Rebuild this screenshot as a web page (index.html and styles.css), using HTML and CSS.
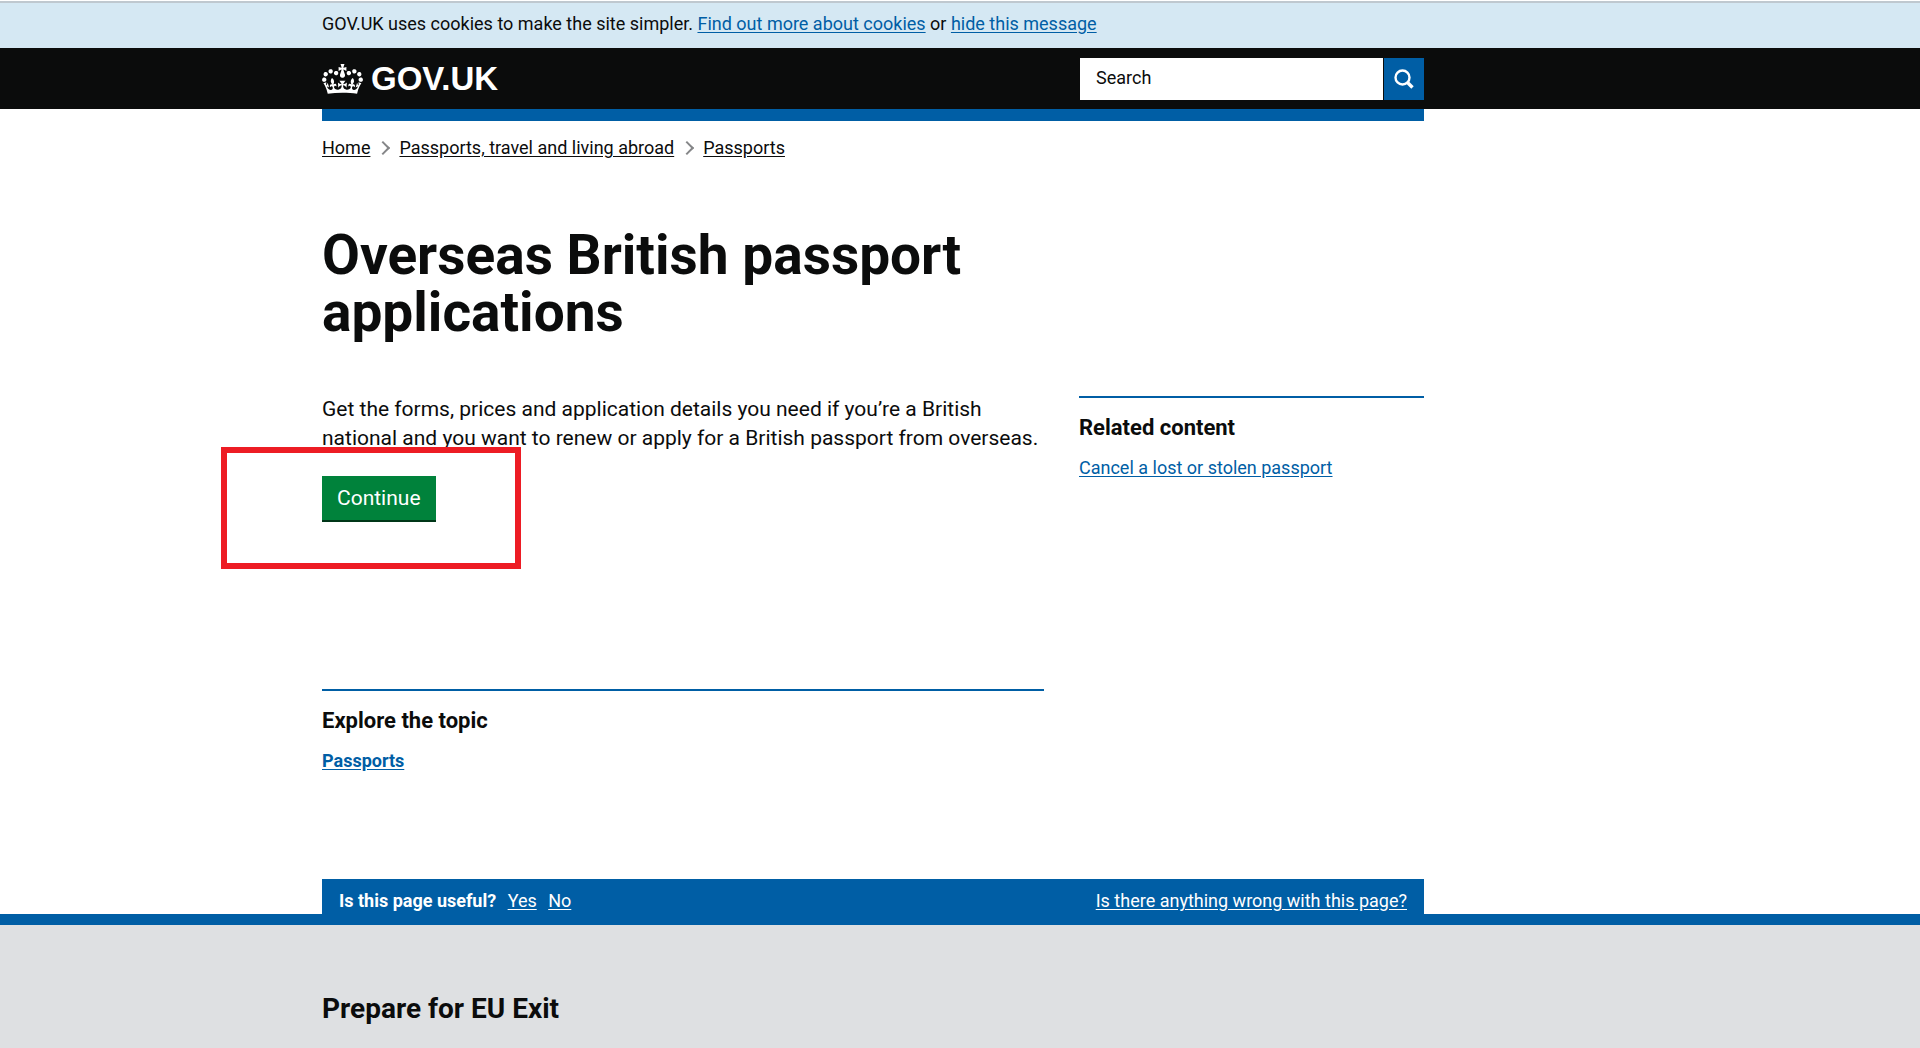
FILE: index.html
```html
<!DOCTYPE html>
<html lang="en">
<head>
  <meta charset="UTF-8">
  <meta name="viewport" content="width=device-width, initial-scale=1.0">
  <title>Overseas British passport applications - GOV.UK</title>
  <link rel="stylesheet" href="styles.css">
</head>
<body>
  <div class="cookie-bar">
    <p class="wrapper">GOV.UK uses cookies to make the site simpler. <a href="#">Find out more about cookies</a> or <a href="#">hide this message</a></p>
  </div>

  <header class="header">
    <div class="wrapper header-inner">
      <a href="#" class="logo">
        <svg class="crown" viewBox="0 0 132 97" width="41" height="30" aria-hidden="true">
          <path fill="currentColor" d="M25 30.2c3.5 1.5 7.7-.2 9.1-3.7 1.5-3.6-.2-7.8-3.9-9.2-3.6-1.4-7.6.3-9.1 3.9-1.4 3.5.3 7.5 3.9 9zM9 39.5c3.6 1.5 7.8-.2 9.2-3.7 1.5-3.6-.2-7.8-3.9-9.1-3.6-1.5-7.6.2-9.1 3.8-1.4 3.5.3 7.5 3.8 9zM4.4 57.2c3.5 1.5 7.7-.2 9.1-3.8 1.5-3.6-.2-7.7-3.9-9.1-3.5-1.5-7.6.3-9.1 3.8-1.4 3.5.3 7.6 3.9 9.1zm38.3-21.4c3.5 1.5 7.7-.2 9.1-3.8 1.5-3.6-.2-7.7-3.9-9.1-3.6-1.5-7.6.3-9.1 3.8-1.3 3.6.4 7.7 3.9 9.1zm64.4-5.6c-3.6 1.5-7.8-.2-9.1-3.7-1.5-3.6.2-7.8 3.8-9.2 3.6-1.4 7.7.3 9.2 3.9 1.3 3.5-.4 7.5-3.9 9zm15.9 9.3c-3.6 1.5-7.7-.2-9.1-3.7-1.5-3.6.2-7.8 3.7-9.1 3.6-1.5 7.7.2 9.2 3.8 1.5 3.5-.3 7.5-3.8 9zm4.7 17.7c-3.6 1.5-7.8-.2-9.2-3.8-1.5-3.6.2-7.7 3.9-9.1 3.6-1.5 7.7.3 9.2 3.8 1.3 3.5-.4 7.6-3.9 9.1zM89.3 35.8c-3.6 1.5-7.8-.2-9.2-3.8-1.4-3.6.2-7.7 3.9-9.1 3.6-1.5 7.7.3 9.2 3.8 1.4 3.6-.3 7.7-3.9 9.1zM69.7 17.7l8.9 4.7V9.3l-8.9 2.8c-.2-.3-.5-.6-.9-.9L72.4 0H59.6l3.5 11.2c-.3.3-.6.5-.9.9l-8.8-2.8v13.1l8.8-4.7c.3.3.6.7.9.9l-5 15.4v.1c-.2.8-.4 1.6-.4 2.4 0 4.1 3.1 7.5 7 8.1h.2c.3 0 .7.1 1 .1.4 0 .7 0 1-.1h.2c4-.6 7.1-4.1 7.1-8.1 0-.8-.1-1.7-.4-2.4V34l-5.1-15.4c.4-.2.7-.6 1-.9zM66 92.8c16.9 0 32.8 1.1 47.1 3.2 4-16.9 8.9-26.7 14-33.5l-9.6-3.4c1 4.9 1.1 7.2 0 10.2-1.5-1.4-3-4.3-4.2-8.7L108.6 76c2.8-2 5-3.2 7.5-3.3-4.4 9.4-10 11.9-13.6 11.2-4.3-.8-6.3-4.6-5.6-7.9 1-4.7 5.7-5.9 8-.5 4.3-8.7-3-11.4-7.6-8.8 7.1-7.2 7.9-13.5 2.1-21.1-8 6.1-8.1 12.3-4.5 20.8-4.7-5.4-12.1-2.5-9.5 6.2 3.4-5.2 7.9-2 7.2 3.1-.6 4.3-6.4 7.8-13.5 7.2-10.3-.9-10.9-8-11.2-13.8 2.5-.5 7.1 1.8 11 7.3L80.2 60c-4.1 4.4-8 5.3-12.3 5.4 1.4-4.4 8-11.6 8-11.6H55.5s6.4 7.2 7.9 11.6c-4.2-.1-8-1-12.3-5.4l1.4 16.4c3.9-5.5 8.5-7.7 10.9-7.3-.3 5.8-.9 12.8-11.1 13.8-7.2.6-12.9-2.9-13.5-7.2-.7-5 3.8-8.3 7.1-3.1 2.7-8.7-4.6-11.6-9.4-6.2 3.7-8.5 3.6-14.7-4.6-20.8-5.8 7.6-5 13.9 2.2 21.1-4.7-2.6-11.9.1-7.7 8.8 2.3-5.5 7.1-4.2 8.1.5.7 3.3-1.3 7.1-5.7 7.9-3.5.7-9-1.8-13.5-11.2 2.5.1 4.7 1.3 7.5 3.3l-4.7-15.4c-1.2 4.4-2.7 7.2-4.3 8.7-1.1-3-.9-5.3 0-10.2l-9.5 3.4c5 6.9 9.9 16.7 14 33.5 14.8-2.1 30.8-3.2 47.7-3.2z"/>
        </svg>
        <span>GOV.UK</span>
      </a>
      <form class="search">
        <input type="search" name="q" placeholder="Search" aria-label="Search">
        <button type="submit" aria-label="Search GOV.UK">
          <svg viewBox="0 0 20 20" width="20" height="20" fill="none" stroke="currentColor" aria-hidden="true">
            <circle cx="8.5" cy="8.5" r="7" stroke-width="2.4"/>
            <path d="M13.5 13.5l5 5" stroke-width="3.4"/>
          </svg>
        </button>
      </form>
    </div>
  </header>

  <div class="wrapper">
    <div class="header-bar"></div>

    <nav aria-label="Breadcrumb">
      <ol class="breadcrumbs">
        <li><a href="#">Home</a></li>
        <li><a href="#">Passports, travel and living abroad</a></li>
        <li><a href="#">Passports</a></li>
      </ol>
    </nav>

    <main>
      <h1>Overseas British passport applications</h1>

      <div class="columns">
        <div class="content">
          <p class="intro">Get the forms, prices and application details you need if you’re a British national and you want to renew or apply for a British passport from overseas.</p>
          <div class="start">
            <button type="button" class="button">Continue</button>
            <div class="highlight"></div>
          </div>

          <section class="topic">
            <h2>Explore the topic</h2>
            <a href="#">Passports</a>
          </section>
        </div>

        <aside class="related">
          <h2>Related content</h2>
          <a href="#">Cancel a lost or stolen passport</a>
        </aside>
      </div>
    </main>

    <div class="feedback">
      <p><strong>Is this page useful?</strong> <a href="#">Yes</a> <a href="#">No</a></p>
      <a href="#">Is there anything wrong with this page?</a>
    </div>
  </div>

  <footer class="footer">
    <div class="wrapper">
      <h2>Prepare for EU Exit</h2>
    </div>
  </footer>
</body>
</html>
```
FILE: styles.css
```css
* {
  box-sizing: border-box;
}

body {
  display: flex;
  flex-direction: column;
  min-height: 100vh;
  margin: 0;
  font-family: Roboto, "Liberation Sans", sans-serif;
  font-size: 18px;
  line-height: 24px;
  color: #0b0c0c;
  background: #fff;
}

h1, h2, p, ol {
  margin: 0;
  padding: 0;
}

h2 {
  font-size: 22px;
  line-height: 28px;
}

a {
  color: #005ea5;
  text-underline-offset: 2px;
}

.wrapper {
  width: calc(100% - 40px);
  max-width: 1102px;
  margin-left: max(20px, calc(50% - 638px));
}

/* Cookie message */
.cookie-bar {
  margin-top: 1px;
  padding: 9px 0 12px;
  border-top: 2px solid #bfc8cf;
  background: #d5e8f3;
}

/* Header */
.header {
  background: #0b0c0c;
}

.header-inner {
  display: flex;
  justify-content: space-between;
  align-items: center;
  height: 61px;
}

.logo {
  display: flex;
  align-items: center;
  gap: 8px;
  font: bold 33px/36px "Liberation Sans", Arial, sans-serif;
  color: #fff;
  text-decoration: none;
}

.search {
  display: flex;
  gap: 1px;
  width: 344px;
  height: 42px;
}

.search input {
  flex: 1;
  min-width: 0;
  padding: 0 16px 2px;
  border: 0;
  border-radius: 0;
  font: inherit;
  background: #fff;
}

.search input::placeholder {
  color: #0b0c0c;
}

.search button {
  display: flex;
  align-items: center;
  justify-content: center;
  width: 40px;
  padding: 0;
  border: 0;
  color: #fff;
  background: #005ea5;
}

.header-bar {
  height: 12px;
  background: #005ea5;
}

/* Breadcrumbs */
.breadcrumbs {
  display: flex;
  flex-wrap: wrap;
  margin-top: 15px;
  list-style: none;
}

.breadcrumbs li {
  display: flex;
  align-items: center;
}

.breadcrumbs li + li::before {
  content: "";
  width: 8px;
  height: 8px;
  margin: 0 11px 0 8px;
  border: solid #858688;
  border-width: 2px 2px 0 0;
  transform: rotate(45deg);
}

.breadcrumbs a {
  color: #0b0c0c;
}

/* Page content */
h1 {
  max-width: 722px;
  margin: 67px 0 54px;
  font-size: 55px;
  line-height: 57px;
}

.columns {
  display: grid;
  grid-template-columns: 722fr 345fr;
  gap: 35px;
}

.intro {
  font-size: 21px;
  line-height: 29px;
}

.start {
  position: relative;
  width: fit-content;
  margin-top: 23px;
}

.button {
  display: block;
  padding: 9px 15px 8px;
  border: 0;
  border-bottom: 2px solid #003618;
  font: inherit;
  font-size: 21px;
  line-height: 27px;
  color: #fff;
  background: #00823b;
}

/* Red frame around the button */
.highlight {
  position: absolute;
  inset: -29px -85px -47px -101px;
  border: 6px solid #ed1c24;
  pointer-events: none;
}

.topic, .related {
  padding-top: 16px;
  border-top: 2px solid #005ea5;
}

.topic {
  margin-top: 167px;
}

.related {
  align-self: start;
  margin-top: 1px;
}

.topic h2, .related h2 {
  margin-bottom: 14px;
}

.topic a {
  font-weight: bold;
}

/* Feedback bar */
.feedback {
  display: flex;
  flex-wrap: wrap;
  justify-content: space-between;
  margin-top: 106px;
  padding: 10px 17px 1px;
  color: #fff;
  background: #005ea5;
}

.feedback a {
  color: #fff;
}

.feedback p a {
  margin-left: 7px;
}

/* Footer */
.footer {
  flex: 1;
  padding: 66px 0 20px;
  border-top: 11px solid #005ea5;
  background: #dee0e2;
}

.footer h2 {
  font-size: 28px;
  line-height: 36px;
}
```
